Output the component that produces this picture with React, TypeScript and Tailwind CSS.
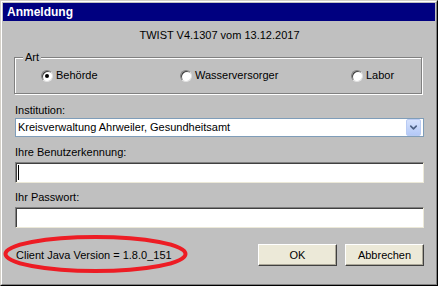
import { ChevronDown } from 'lucide-react'

function Radio({ label, checked }: { label: string; checked?: boolean }) {
  return (
    <div className="flex items-center gap-[3px]">
      <div className="flex h-[12px] w-[12px] items-center justify-center rounded-full border border-t-[#808080] border-l-[#808080] border-r-[#e0e0e0] border-b-[#e0e0e0] bg-white shadow-[inset_1px_1px_0_#404040]">
        {checked && <div className="h-[4px] w-[4px] rounded-full bg-black" />}
      </div>
      <span>{label}</span>
    </div>
  )
}

function TextField({ caret }: { caret?: boolean }) {
  return (
    <div className="mt-[3px] flex h-[21px] items-center border border-t-[#808080] border-l-[#808080] border-r-[#ece9d8] border-b-[#ece9d8] bg-white pl-[1px] shadow-[inset_1px_1px_0_#404040]">
      {caret && <div className="ml-[1px] h-[15px] w-px bg-black" />}
    </div>
  )
}

function Button({ label }: { label: string }) {
  return (
    <button className="h-[22px] w-[79px] border border-t-white border-l-white border-r-[#404040] border-b-[#404040] bg-[#ece9d8] shadow-[inset_-1px_-1px_0_#aca899] text-black">
      {label}
    </button>
  )
}

export default function App() {
  return (
    <div className="h-[286px] w-[438px] border border-t-[#d4d0c8] border-l-[#d4d0c8] border-r-black border-b-black font-['Liberation_Sans',Arial,sans-serif] text-[11px] leading-[13px] text-black">
      <div className="flex h-full flex-col border border-t-white border-l-white border-r-[#808080] border-b-[#808080] bg-[#c0c0c0] p-px">
        <div className="flex h-[18px] items-center bg-[#000080] pl-[4px] text-[12px] font-bold text-white">
          Anmeldung
        </div>

        <div className="flex flex-1 flex-col pl-[12px] pr-[11px]">
          <p className="mt-[8px] text-center">TWIST V4.1307 vom 13.12.2017</p>

          <fieldset className="-ml-px mt-[9px] w-[408px] border border-[#808080] shadow-[inset_1px_1px_0_#fff,1px_1px_0_#fff]">
            <legend className="ml-[8px] bg-[#c0c0c0] px-[2px]">Art</legend>
            <div className="grid grid-cols-[139px_171px_1fr] pb-[11px] pl-[26px] pt-[5px]">
              <Radio label="Behörde" checked />
              <Radio label="Wasserversorger" />
              <Radio label="Labor" />
            </div>
          </fieldset>

          <p className="mt-[10px]">Institution:</p>
          <div className="mt-px flex h-[19px] items-center border border-[#7f9db9] bg-white p-px">
            <span className="flex-1 pl-px">Kreisverwaltung Ahrweiler, Gesundheitsamt</span>
            <div className="mr-px flex h-[17px] w-[15px] items-center justify-center rounded-[2px] border border-[#b9cbf3] bg-gradient-to-b from-[#d6e2fd] to-[#b4c9f7]">
              <ChevronDown size={11} strokeWidth={3.5} className="text-[#4d6185]" />
            </div>
          </div>

          <p className="mt-[9px]">Ihre Benutzerkennung:</p>
          <TextField caret />

          <p className="mt-[8px]">Ihr Passwort:</p>
          <TextField />

          <div className="relative mt-[16px] flex items-center">
            <span className="pl-px">Client Java Version = 1.8.0_151</span>
            <svg className="absolute left-[-12px] top-[-9px]" width="185" height="38" viewBox="0 0 185 38">
              <ellipse cx="92.5" cy="19" rx="90" ry="17" fill="none" stroke="#ed1c24" strokeWidth="4" />
            </svg>
            <div className="ml-auto flex gap-[8px]">
              <Button label="OK" />
              <Button label="Abbrechen" />
            </div>
          </div>
        </div>
      </div>
    </div>
  )
}
